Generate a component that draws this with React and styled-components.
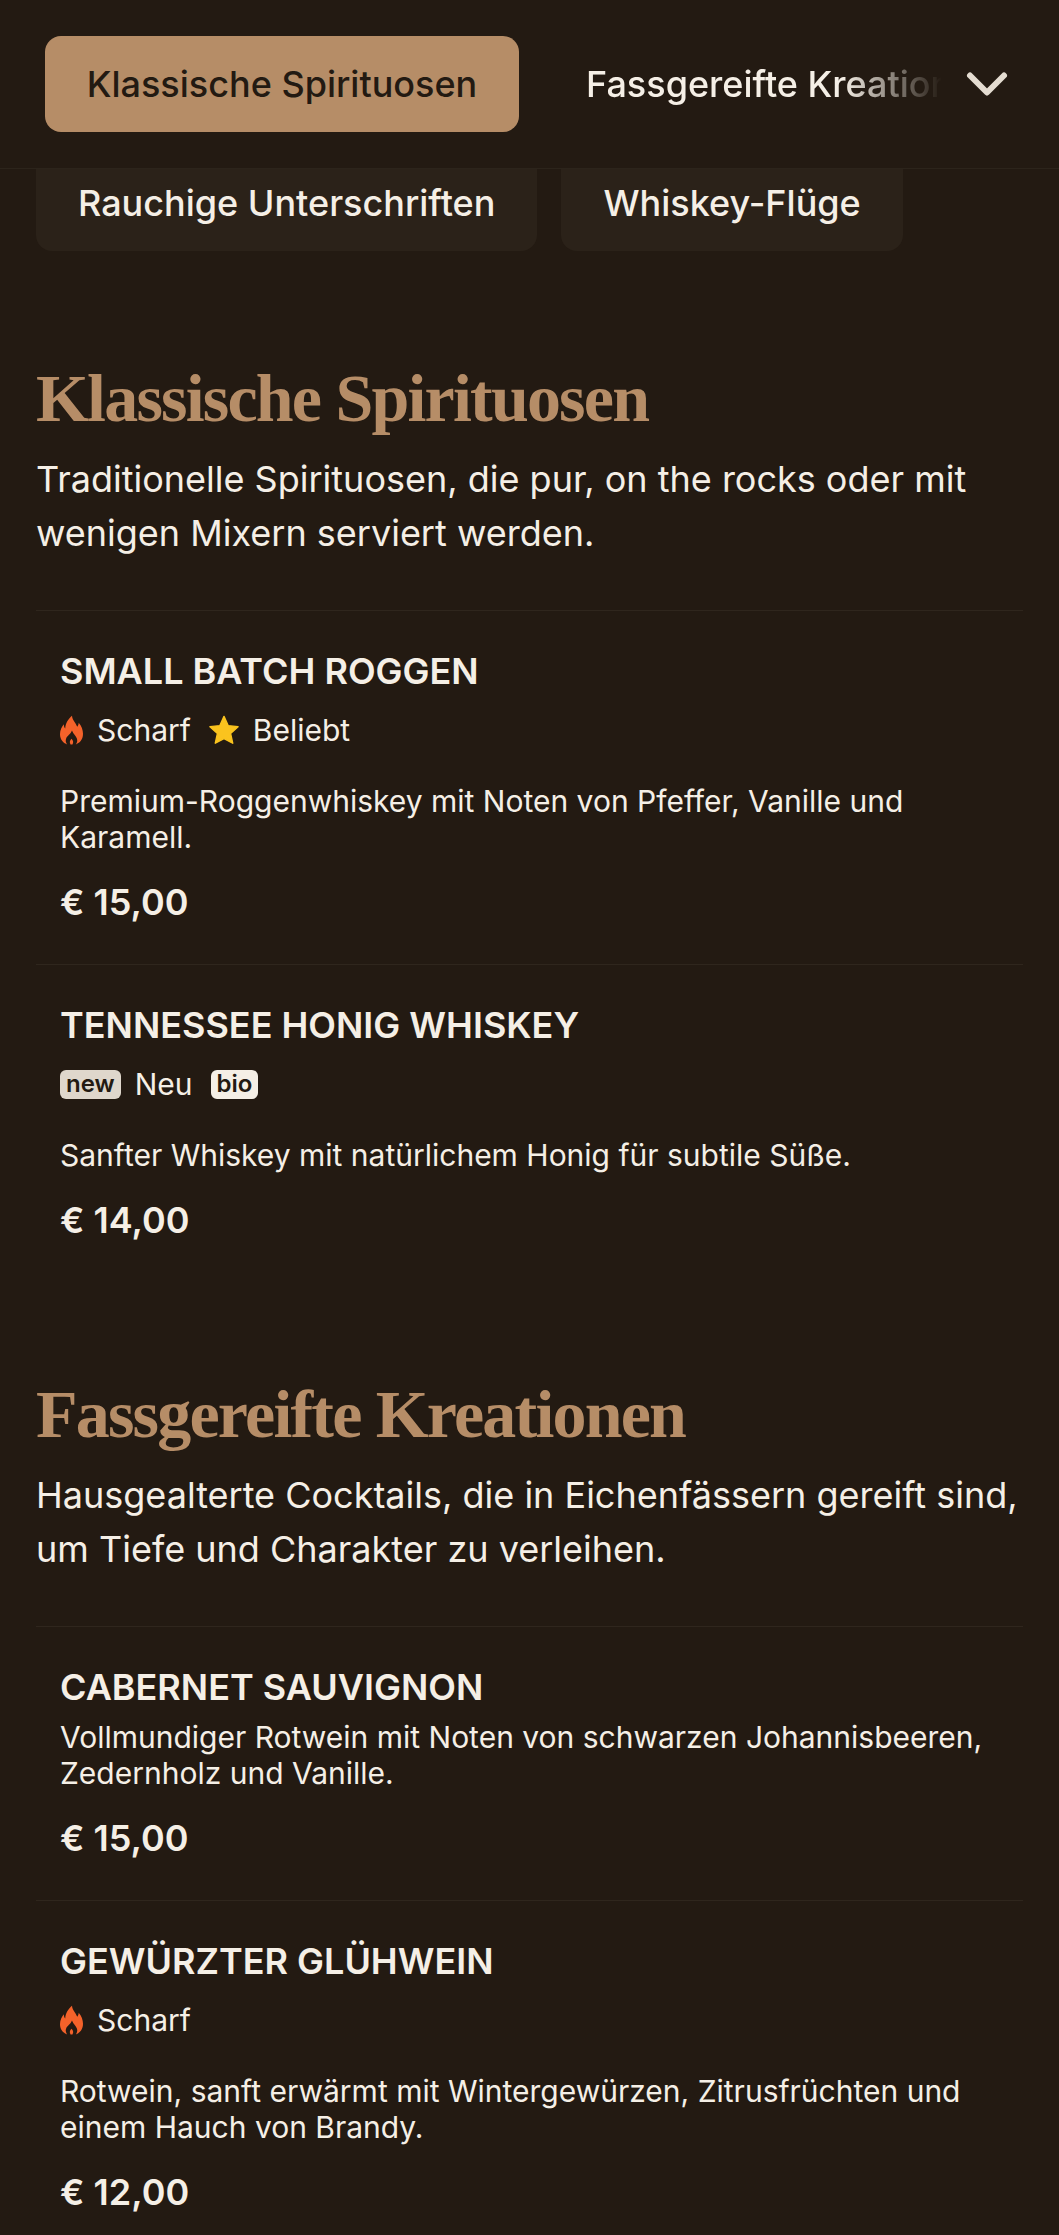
import styled, { createGlobalStyle } from "styled-components";
import { ChevronDown } from "lucide-react";

const GlobalStyle = createGlobalStyle`
  html, body {
    margin: 0;
    padding: 0;
    background: #231a12;
  }
  * {
    box-sizing: border-box;
  }
`;

const Page = styled.div`
  width: 1059px;
  height: 2235px;
  overflow: hidden;
  background: #231a12;
  color: #f5efe6;
  font-family: Inter, "Liberation Sans", sans-serif;
`;

const Header = styled.header`
  display: flex;
  align-items: center;
  height: 169px;
  padding: 0 38px 0 45px;
  border-bottom: 1px solid #2c241b;
`;

const ActiveTab = styled.div`
  flex: none;
  display: flex;
  align-items: center;
  justify-content: center;
  width: 474px;
  height: 96px;
  border-radius: 16px;
  background: #b68d67;
  color: #231a12;
  font-size: 36px;
  font-weight: 500;
`;

const ClippedTab = styled.div`
  flex: 1;
  min-width: 0;
  margin-left: 67px;
  overflow: hidden;
  white-space: nowrap;
  font-size: 36px;
  font-weight: 500;
  -webkit-mask-image: linear-gradient(to right, #000 70%, transparent 97%);
  mask-image: linear-gradient(to right, #000 70%, transparent 97%);
`;

const TabRow = styled.div`
  display: flex;
  gap: 24px;
  padding: 0 36px;
`;

const Tab = styled.div`
  display: flex;
  align-items: center;
  height: 82px;
  padding: 0 42px 14px;
  border-radius: 0 0 16px 16px;
  background: #2b2219;
  font-size: 36px;
  font-weight: 500;
`;

const Section = styled.section`
  padding: 0 36px;
  margin-top: ${(p) => p.$top}px;
`;

const Heading = styled.h2`
  margin: 0;
  color: #b68d67;
  font-family: "Liberation Serif", serif;
  font-size: 68px;
  font-weight: 700;
  line-height: 80px;
  letter-spacing: -1.8px;
`;

const Intro = styled.p`
  margin: 14px 0 50px;
  font-size: 36px;
  line-height: 54px;
`;

const Item = styled.article`
  height: ${(p) => p.$height}px;
  padding: 38px 24px 0;
  border-top: 1px solid #2f261d;
`;

const ItemTitle = styled.h3`
  margin: 0;
  font-size: 36px;
  font-weight: 600;
  line-height: 44px;
`;

const TagRow = styled.div`
  display: flex;
  align-items: center;
  height: 44px;
  margin-top: 15px;
  font-size: 30px;
`;

const Tag = styled.span`
  display: flex;
  align-items: center;
  gap: 14px;
  margin-right: 18px;
`;

const Chip = styled.span`
  display: inline-flex;
  align-items: center;
  justify-content: center;
  height: 29px;
  padding: 0 6px 2px;
  border-radius: 6px;
  background: ${(p) => (p.$dim ? "#dfd7cc" : "#f5efe6")};
  color: #231a12;
  font-size: 24px;
  font-weight: 600;
`;

const Description = styled.p`
  margin: ${(p) => p.$top}px 0 0;
  font-size: 30px;
  line-height: 36px;
`;

const Price = styled.div`
  margin-top: 24px;
  font-size: 36px;
  font-weight: 600;
  line-height: 46px;
`;

const Flame = () => (
  <svg width="23" height="30" viewBox="0 0 24 30">
    <path
      fill="#f4622a"
      d="M12.500 0C13 5 16.500 7.500 18 11.500C19 10.500 19.500 9 19.500 7.500C22.500 11 24 15 24 19C24 25.500 20 29 16.500 30C18 28 18.500 26 17.500 23.500C16.500 21 14 19.500 12.500 15.500C11 19.500 7.500 21 6.500 23.500C5.500 26 6 28 7.500 30C4 29 0 25.500 0 19.500C0 15 2 11.500 4 9C4 11 4.500 12.500 5.500 13.500C5.500 8 8.500 3.500 12.500 0ZM12 24C10.500 25.500 9.500 27.500 11 30L13 30C14.500 27.500 13.500 25.500 12 24Z"
    />
  </svg>
);

const Star = () => (
  <svg width="30" height="30" viewBox="0 0 32 32">
    <path
      fill="#fac31e"
      stroke="#fac31e"
      strokeWidth="1.500"
      strokeLinejoin="round"
      d="M16 1.500l4.400 9.800 10.600 1.100-8 7.200 2.300 10.500L16 25.200l-9.300 4.900 2.300-10.500-8-7.200 10.600-1.100z"
    />
  </svg>
);

const App = () => (
  <Page>
    <GlobalStyle />
    <Header>
      <ActiveTab>Klassische Spirituosen</ActiveTab>
      <ClippedTab>Fassgereifte Kreationen</ClippedTab>
      <ChevronDown size={68} color="#e4dcd1" strokeWidth={2.1} style={{ flex: "none" }} />
    </Header>
    <TabRow>
      <Tab>Rauchige Unterschriften</Tab>
      <Tab>Whiskey-Flüge</Tab>
    </TabRow>

    <Section $top={107}>
      <Heading>Klassische Spirituosen</Heading>
      <Intro>Traditionelle Spirituosen, die pur, on the rocks oder mit wenigen Mixern serviert werden.</Intro>
      <Item $height={354}>
        <ItemTitle>SMALL BATCH ROGGEN</ItemTitle>
        <TagRow>
          <Tag>
            <Flame /> Scharf
          </Tag>
          <Tag>
            <Star /> Beliebt
          </Tag>
        </TagRow>
        <Description $top={31}>Premium-Roggenwhiskey mit Noten von Pfeffer, Vanille und Karamell.</Description>
        <Price>€ 15,00</Price>
      </Item>
      <Item $height={300}>
        <ItemTitle>TENNESSEE HONIG WHISKEY</ItemTitle>
        <TagRow>
          <Tag>
            <Chip $dim>new</Chip> Neu
          </Tag>
          <Tag>
            <Chip>bio</Chip>
          </Tag>
        </TagRow>
        <Description $top={31}>Sanfter Whiskey mit natürlichem Honig für subtile Süße.</Description>
        <Price>€ 14,00</Price>
      </Item>
    </Section>

    <Section $top={110}>
      <Heading>Fassgereifte Kreationen</Heading>
      <Intro>Hausgealterte Cocktails, die in Eichenfässern gereift sind, um Tiefe und Charakter zu verleihen.</Intro>
      <Item $height={274}>
        <ItemTitle>CABERNET SAUVIGNON</ItemTitle>
        <Description $top={10}>Vollmundiger Rotwein mit Noten von schwarzen Johannisbeeren, Zedernholz und Vanille.</Description>
        <Price>€ 15,00</Price>
      </Item>
      <Item $height={340}>
        <ItemTitle>GEWÜRZTER GLÜHWEIN</ItemTitle>
        <TagRow>
          <Tag>
            <Flame /> Scharf
          </Tag>
        </TagRow>
        <Description $top={31}>Rotwein, sanft erwärmt mit Wintergewürzen, Zitrusfrüchten und einem Hauch von Brandy.</Description>
        <Price>€ 12,00</Price>
      </Item>
    </Section>
  </Page>
);

export default App;
